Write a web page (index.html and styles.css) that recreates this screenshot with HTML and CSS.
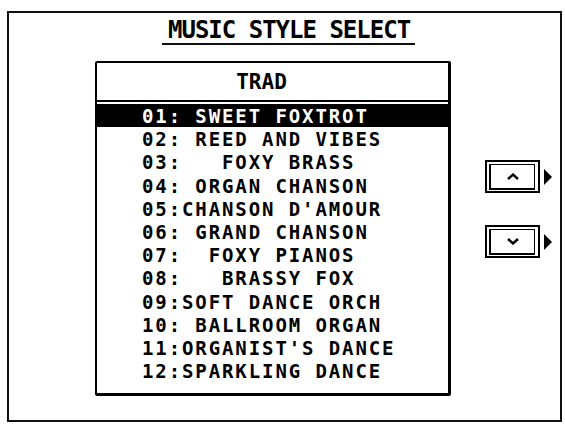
FILE: index.html
```html
<!DOCTYPE html>
<html lang="en">
<head>
  <meta charset="UTF-8">
  <title>Music Style Select</title>
  <link rel="stylesheet" href="styles.css">
</head>
<body>
  <div class="frame">
    <!-- Title -->
    <h1 class="title">MUSIC STYLE SELECT</h1>

    <div class="main">
      <!-- Style list -->
      <div class="list-box">
        <div class="list-head">TRAD</div>
        <ul class="list">
          <li class="row selected">01: SWEET FOXTROT</li>
          <li class="row">02: REED AND VIBES</li>
          <li class="row">03:   FOXY BRASS</li>
          <li class="row">04: ORGAN CHANSON</li>
          <li class="row">05:CHANSON D'AMOUR</li>
          <li class="row">06: GRAND CHANSON</li>
          <li class="row">07:  FOXY PIANOS</li>
          <li class="row">08:   BRASSY FOX</li>
          <li class="row">09:SOFT DANCE ORCH</li>
          <li class="row">10: BALLROOM ORGAN</li>
          <li class="row">11:ORGANIST'S DANCE</li>
          <li class="row">12:SPARKLING DANCE</li>
        </ul>
      </div>

      <!-- Scroll buttons -->
      <div class="buttons">
        <div class="btn-line">
          <div class="btn">
            <div class="btn-inner">
              <svg width="12" height="7" viewBox="0 0 12 7"><polyline points="1,6 6,1.5 11,6" fill="none" stroke="#000" stroke-width="2.4"/></svg>
            </div>
          </div>
          <span class="pointer"></span>
        </div>
        <div class="btn-line">
          <div class="btn">
            <div class="btn-inner">
              <svg width="12" height="7" viewBox="0 0 12 7"><polyline points="1,1 6,5.5 11,1" fill="none" stroke="#000" stroke-width="2.4"/></svg>
            </div>
          </div>
          <span class="pointer"></span>
        </div>
      </div>
    </div>
  </div>
</body>
</html>
```

FILE: styles.css
```css
body {
  margin: 0;
  padding: 11px 0 0 7px;
  background: #fff;
  color: #000;
  font-family: 'DejaVu Sans Mono', 'Liberation Mono', monospace;
  font-weight: bold;
}

.frame {
  box-sizing: border-box;
  width: 555px;
  height: 411px;
  border: 2px solid #111;
  display: flex;
  flex-direction: column;
}

.title {
  align-self: flex-start;
  margin: 5px 0 0 153px;
  padding: 0 5px 1px 6px;
  font-size: 24px;
  line-height: 24px;
  letter-spacing: -1px;
  border-bottom: 2px solid #111;
  white-space: pre;
}

.main {
  display: flex;
  align-items: flex-start;
  margin-top: 16px;
}

.list-box {
  box-sizing: border-box;
  width: 356px;
  height: 335px;
  margin-left: 86px;
  border: 2px solid #000;
  border-right-width: 3px;
  border-bottom-width: 3px;
  border-radius: 2px;
}

.list-head {
  height: 37px;
  line-height: 38px;
  font-size: 21px;
  text-align: center;
  padding-right: 22px;
  border-bottom: 2px solid #000;
}

.list {
  list-style: none;
  margin: 0;
  padding: 2px 0 0 0;
}

.row {
  height: 23.2px;
  line-height: 24px;
  padding-left: 45px;
  font-size: 19px;
  letter-spacing: 1.9px;
  white-space: pre;
}

.row.selected {
  background: #000;
  color: #fff;
}

.buttons {
  display: flex;
  flex-direction: column;
  gap: 32px;
  margin: 99px 0 0 34px;
}

.btn-line {
  display: flex;
  align-items: center;
  gap: 4px;
}

.btn {
  box-sizing: border-box;
  width: 55px;
  height: 33px;
  border: 2px solid #000;
  padding: 2px 3px 1px 2px;
}

.btn-inner {
  box-sizing: border-box;
  height: 100%;
  border: 1px solid #000;
  border-left-width: 2px;
  border-bottom-width: 2px;
  display: flex;
  align-items: center;
  justify-content: center;
}

.pointer {
  width: 0;
  height: 0;
  border-top: 8px solid transparent;
  border-bottom: 8px solid transparent;
  border-left: 8px solid #000;
}
```
